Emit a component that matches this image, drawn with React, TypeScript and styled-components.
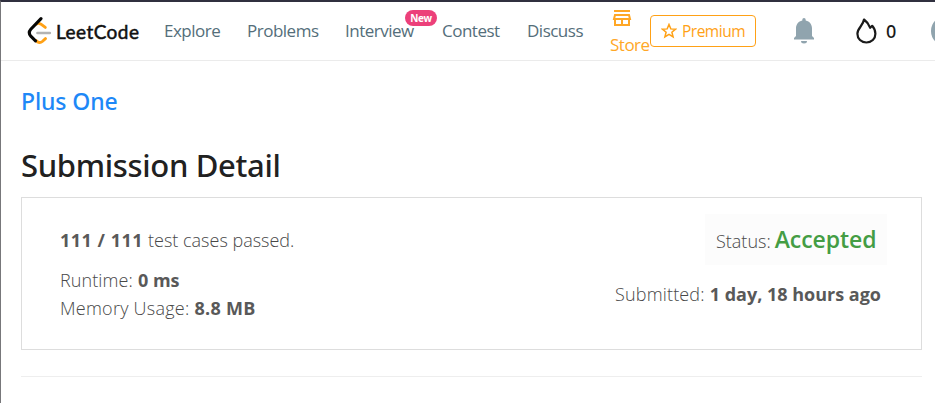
import React from "react";
import styled, { createGlobalStyle } from "styled-components";

const GlobalStyle = createGlobalStyle`
  * { box-sizing: border-box; }
  body {
    margin: 0;
    overflow: hidden;
    background: #fff;
    font-family: "Open Sans", "Noto Sans", sans-serif;
    color: #595959;
  }
`;

const Page = styled.div`
  height: 403px;
  overflow: hidden;
  border-top: 2px solid #30303f;
  border-left: 1px solid #77777a;
`;

const Header = styled.header`
  display: flex;
  align-items: center;
  width: 980px;
  height: 59px;
  padding-left: 26px;
  border-bottom: 1px solid #ebebeb;
`;

const Brand = styled.a`
  display: flex;
  align-items: center;
  flex: none;
  width: 137px;
  height: 32px;
`;

const BrandName = styled.span`
  margin: 2px 0 0 3px;
  font: 400 19px/24px Lato, sans-serif;
  letter-spacing: 0.45px;
  color: #111;
  -webkit-text-stroke: 0.5px #111;
`;

const Nav = styled.nav`
  display: flex;
  align-items: center;
  flex: none;
  gap: 27px;
`;

const NavLink = styled.a<{ $width: number }>`
  position: relative;
  width: ${(p) => p.$width}px;
  white-space: nowrap;
  font-size: 17px;
  line-height: 24px;
  letter-spacing: -0.5px;
  color: #546e7a;
`;

const NewBadge = styled.span`
  position: absolute;
  left: 60px;
  top: -9px;
  width: 32px;
  height: 16px;
  border-radius: 8px;
  background: #ec407a;
  color: #fff;
  font-size: 10px;
  font-weight: 700;
  line-height: 17px;
  letter-spacing: -0.3px;
  text-align: center;
`;

const StoreLink = styled(NavLink)`
  display: flex;
  flex-direction: column;
  color: #ffa726;
  padding-top: 5px;

  svg { margin: 0 0 6px 2px; }
`;

const PremiumButton = styled.a`
  display: flex;
  align-items: center;
  flex: none;
  width: 106px;
  height: 32px;
  padding-left: 10px;
  gap: 5px;
  border: 1px solid #ffa116;
  border-radius: 4px;
  color: #ffa116;
  font-size: 15.5px;
  line-height: 30px;
  letter-spacing: -0.5px;
`;

const Tools = styled.div`
  display: flex;
  align-items: center;
  flex: none;
  margin-left: 38px;
`;

const Streak = styled.div`
  display: flex;
  align-items: center;
  gap: 9px;
  margin: 0 35px 0 42px;
  color: #1a1a1a;
  font-family: "Noto Sans", sans-serif;
  font-size: 18px;
  font-weight: 500;
  line-height: 24px;
`;

const Avatar = styled.div`
  width: 30px;
  height: 30px;
  border-radius: 50%;
  background: #90a4ae;
`;

const Main = styled.main`
  width: 901px;
  margin-left: 20px;
`;

const ProblemLink = styled.a`
  display: block;
  padding-top: 25px;
  font-family: "Noto Sans", sans-serif;
  font-size: 23px;
  font-weight: 500;
  line-height: 30px;
  letter-spacing: -0.1px;
  color: #1e88f7;
`;

const Title = styled.h1`
  margin: 29px 0 0;
  font-family: "Noto Sans", sans-serif;
  font-size: 31px;
  font-weight: 500;
  line-height: 40px;
  letter-spacing: -0.33px;
  color: #212121;
`;

const Card = styled.section`
  display: flex;
  justify-content: space-between;
  height: 153px;
  margin-top: 12px;
  padding: 0 34px 0 38px;
  border: 1px solid #ddd;
  font-size: 18px;
  font-weight: 300;
  line-height: 28px;
`;

const Metrics = styled.div`
  padding-top: 28px;
`;

const Outcome = styled.div`
  display: flex;
  flex-direction: column;
  align-items: flex-end;
  padding-top: 16px;
`;

const Line = styled.div<{ $after?: number }>`
  display: flex;
  align-items: baseline;
  gap: 5px;
  white-space: nowrap;
  margin-bottom: ${(p) => p.$after ?? 0}px;
`;

const Run = styled.span<{ $track?: number }>`
  color: #484848;
  letter-spacing: ${(p) => p.$track ?? 0}px;
`;

const Value = styled(Run)`
  color: #595959;
  font-weight: 700;
`;

const StatusBox = styled(Line)`
  width: 182px;
  height: 51px;
  padding: 11px 0 0 11px;
  gap: 4px;
  background: #fcfcfc;
`;

const Verdict = styled.span`
  font-size: 23px;
  font-weight: 600;
  letter-spacing: -0.05px;
  color: #449d44;
`;

const SubmittedLine = styled(Line)`
  margin: 15px 6px 0 0;
`;

const Divider = styled.hr`
  height: 1px;
  margin: 26px 0 0;
  border: 0;
  background: #eee;
`;

const LogoMark = () => (
  <svg width="26" height="32" viewBox="27 14 26 32" fill="none" strokeLinecap="round">
    <path d="M36.5 23q2-1.300 4.500.2l4.300 3.200M36 39.500c2 2.400 4.500 2.500 6.300 1l3.200-2.900" stroke="#ffa116" strokeWidth="2.900" />
    <path d="M37.500 32h12.300" stroke="#b3b3b3" strokeWidth="2.700" />
    <path d="M41 17.600 30.800 28.300q-3 3.500 0 6.900l4.700 4.600" stroke="#070706" strokeWidth="3.100" />
  </svg>
);

const StoreIcon = () => (
  <svg width="20" height="17" viewBox="0 0 20 17" fill="none" stroke="#ffa726" strokeWidth="2">
    <path d="M2 1h16M3 5h14l1 4H2zM3 9v6h14V9M10 9v6M3 15h14" />
  </svg>
);

const StarIcon = () => (
  <svg width="16" height="16" viewBox="0 0 16 16" fill="none" stroke="#ffa116" strokeWidth="1.500">
    <path d="m8 1.500 1.800 4.400 4.700.3-3.600 3 1.200 4.600L8 11.300l-4.100 2.500 1.200-4.600-3.600-3 4.700-.3z" />
  </svg>
);

const BellIcon = () => (
  <svg width="20" height="26" viewBox="0 0 20 26" fill="#90a4ae">
    <path d="M8.300 2.500V1.700a1.700 1.700 0 0 1 3.400 0v.8c4 .8 6.300 4 6.300 8V18l2 2v1.500H0V20l2-2v-7.500c0-4 2.300-7.200 6.300-8zM7 23h6a3 2.500 0 0 1-6 0z" />
  </svg>
);

const FlameIcon = () => (
  <svg width="21" height="26" viewBox="0 0 21 26" fill="none" stroke="#1a1a1a" strokeWidth="2.200" strokeLinejoin="round">
    <path d="M8 1.500c3 2.200 5 5 6.200 8.300l2-2c2 2.300 3.200 4.800 3.200 8 0 5-3.800 8.700-9 8.700s-9-3.700-9-8.700C1.400 10 7 8 8 1.500z" />
  </svg>
);

export default function App() {
  return (
    <>
      <GlobalStyle />
      <Page>
        <Header>
          <Brand>
            <LogoMark />
            <BrandName>LeetCode</BrandName>
          </Brand>
          <Nav>
            <NavLink $width={56}>Explore</NavLink>
            <NavLink $width={71}>Problems</NavLink>
            <NavLink $width={70}>Interview<NewBadge>New</NewBadge></NavLink>
            <NavLink $width={58}>Contest</NavLink>
            <NavLink $width={56}>Discuss</NavLink>
            <StoreLink $width={40}><StoreIcon />Store</StoreLink>
          </Nav>
          <PremiumButton><StarIcon />Premium</PremiumButton>
          <Tools>
            <BellIcon />
            <Streak><FlameIcon />0</Streak>
            <Avatar />
          </Tools>
        </Header>
        <Main>
          <ProblemLink>Plus One</ProblemLink>
          <Title>Submission Detail</Title>
          <Card>
            <Metrics>
              <Line $after={12}><Value $track={0.5}>111 / 111</Value><Run>test cases passed.</Run></Line>
              <Line><Run $track={0.1}>Runtime:</Run><Value>0 ms</Value></Line>
              <Line><Run $track={0.25}>Memory Usage:</Run><Value $track={0.3}>8.8 MB</Value></Line>
            </Metrics>
            <Outcome>
              <StatusBox><Run>Status:</Run><Verdict>Accepted</Verdict></StatusBox>
              <SubmittedLine><Run $track={0.15}>Submitted:</Run><Value>1 day, 18 hours ago</Value></SubmittedLine>
            </Outcome>
          </Card>
          <Divider />
        </Main>
      </Page>
    </>
  );
}
